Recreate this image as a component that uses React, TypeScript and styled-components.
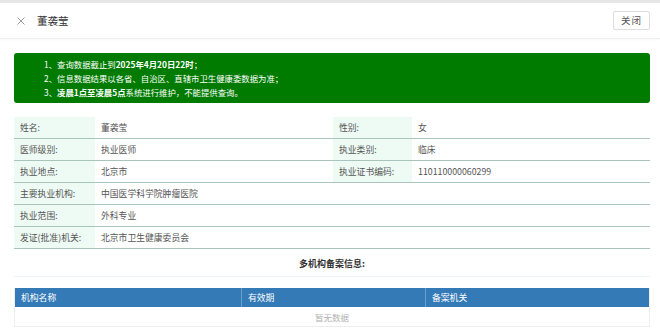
import React from 'react';
import styled, { createGlobalStyle } from 'styled-components';

const GlobalStyle = createGlobalStyle`
  html, body {
    margin: 0;
    padding: 0;
    background: #ffffff;
  }
  body {
    font-family: "Noto Sans CJK SC", "Noto Sans", sans-serif;
    color: #333;
  }
`;

const Page = styled.div`
  width: 660px;
  height: 334px;
  overflow: hidden;
  border-top: 3px solid #e6e6e6;
  box-sizing: border-box;
`;

const Header = styled.div`
  height: 35px;
  display: flex;
  align-items: center;
  padding: 0 10px 0 17px;
  border-bottom: 1px solid #eeeeee;
  box-shadow: 0 1px 2px rgba(0, 0, 0, 0.03);
`;

const CloseIcon = styled.svg`
  width: 8px;
  height: 8px;
  margin-right: 12px;
  flex-shrink: 0;
`;

const Title = styled.span`
  font-size: 10.5px;
  color: #333;
  flex: 1;
`;

const CloseButton = styled.button`
  height: 19px;
  padding: 0 7px;
  border: 1px solid #dddddd;
  border-radius: 2px;
  background: #fff;
  color: #555;
  font-size: 9.5px;
  font-family: inherit;
  letter-spacing: 1px;
  line-height: 17px;
`;

const Body = styled.div`
  padding: 14px 10px 0 14px;
`;

const Notice = styled.div`
  background: #007b00;
  border-radius: 3px;
  padding: 4px 0 4px 30px;
  color: #fff;
  font-size: 8.4px;
  line-height: 14px;
`;

const Bold = styled.b`
  font-weight: 700;
`;

const InfoTable = styled.div`
  margin-top: 14px;
  display: grid;
  grid-template-columns: 81px 238px 79px 238px;
`;

const Cell = styled.div<{ $label?: boolean; $span?: number }>`
  height: 22px;
  box-sizing: border-box;
  display: flex;
  align-items: center;
  padding-left: ${(p) => (p.$label ? '6px' : '6px')};
  border-bottom: 1px solid #a8c4bd;
  background: ${(p) => (p.$label ? '#eefaf4' : '#fff')};
  font-size: 8.8px;
  color: #555;
  white-space: nowrap;
  grid-column: span ${(p) => p.$span ?? 1};
`;

const SectionTitle = styled.div`
  text-align: center;
  font-size: 9px;
  font-weight: 700;
  color: #333;
  padding: 8px 0 6px;
  border-bottom: 1px solid #eef3f8;
`;

const RecordTable = styled.div`
  margin-top: 11px;
  border: 1px solid #eeeeee;
  border-top: none;
`;

const HeadRow = styled.div`
  display: grid;
  grid-template-columns: 226px 184px 1fr;
  background: #337ab7;
  height: 19px;
`;

const HeadCell = styled.div<{ $first?: boolean }>`
  display: flex;
  align-items: center;
  padding-left: 6px;
  color: #fff;
  font-size: 8.8px;
  border-left: ${(p) => (p.$first ? 'none' : '1px solid #6a9fcf')};
`;

const Empty = styled.div`
  height: 19px;
  display: flex;
  align-items: center;
  justify-content: center;
  color: #b3b3b3;
  font-size: 8.5px;
`;

const App: React.FC = () => {
  return (
    <Page>
      <GlobalStyle />
      <Header>
        <CloseIcon viewBox="0 0 8 8">
          <path d="M0.5 0.5 L7.5 7.5 M7.5 0.5 L0.5 7.5" stroke="#999" strokeWidth="1" fill="none" />
        </CloseIcon>
        <Title>董袭莹</Title>
        <CloseButton>关闭</CloseButton>
      </Header>
      <Body>
        <Notice>
          <div>1、查询数据截止到<Bold>2025年4月20日22时</Bold>；</div>
          <div>2、信息数据结果以各省、自治区、直辖市卫生健康委数据为准；</div>
          <div>3、<Bold>凌晨1点至凌晨5点</Bold>系统进行维护，不能提供查询。</div>
        </Notice>

        <InfoTable>
          <Cell $label>姓名:</Cell>
          <Cell>董袭莹</Cell>
          <Cell $label>性别:</Cell>
          <Cell>女</Cell>

          <Cell $label>医师级别:</Cell>
          <Cell>执业医师</Cell>
          <Cell $label>执业类别:</Cell>
          <Cell>临床</Cell>

          <Cell $label>执业地点:</Cell>
          <Cell>北京市</Cell>
          <Cell $label>执业证书编码:</Cell>
          <Cell>110110000060299</Cell>

          <Cell $label>主要执业机构:</Cell>
          <Cell $span={3}>中国医学科学院肿瘤医院</Cell>

          <Cell $label>执业范围:</Cell>
          <Cell $span={3}>外科专业</Cell>

          <Cell $label>发证(批准)机关:</Cell>
          <Cell $span={3}>北京市卫生健康委员会</Cell>
        </InfoTable>

        <SectionTitle>多机构备案信息:</SectionTitle>

        <RecordTable>
          <HeadRow>
            <HeadCell $first>机构名称</HeadCell>
            <HeadCell>有效期</HeadCell>
            <HeadCell>备案机关</HeadCell>
          </HeadRow>
          <Empty>暂无数据</Empty>
        </RecordTable>
      </Body>
    </Page>
  );
};

export default App;
